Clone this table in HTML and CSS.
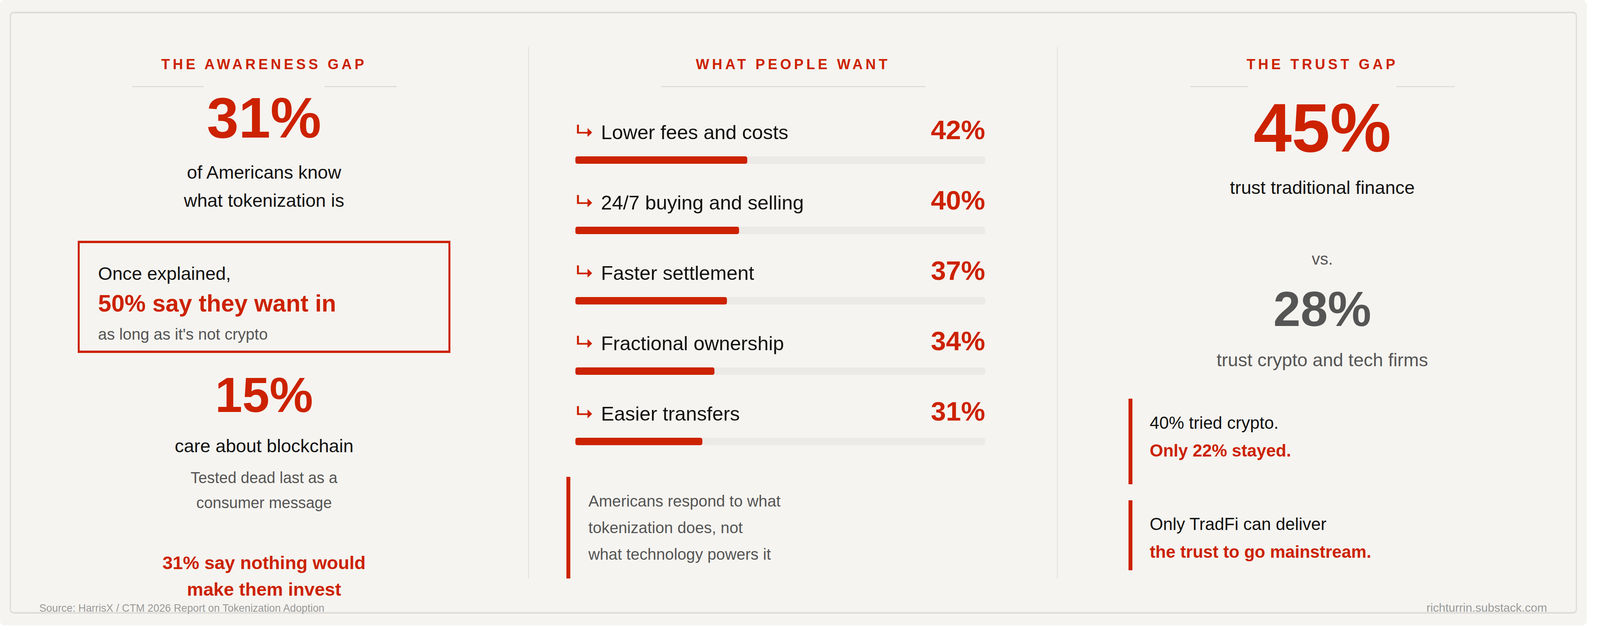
FILE: index.html
```html
<!DOCTYPE html>
<html lang="en">
<head>
<meta charset="utf-8">
<title>Tokenization Adoption</title>
<link rel="stylesheet" href="styles.css">
</head>
<body>
<div class="board">
  <div class="columns">
    <section class="col">
      <header class="col-head"><h2 class="col-title">THE AWARENESS GAP</h2></header>
      <div class="stat-num stat-num--lg">31%</div>
      <p class="stat-label stat-label--first">of Americans know<br>what tokenization is</p>
      <div class="callout">
        <p class="callout-lead">Once explained,</p>
        <p class="callout-key">50% say they want in</p>
        <p class="callout-note">as long as it's not crypto</p>
      </div>
      <div class="stat-num stat-num--md">15%</div>
      <p class="stat-label stat-label--after-md">care about blockchain</p>
      <p class="stat-sub">Tested dead last as a<br>consumer message</p>
      <p class="stat-alert">31% say nothing would<br>make them invest</p>
    </section>

    <section class="col">
      <header class="col-head"><h2 class="col-title">WHAT PEOPLE WANT</h2></header>
      <div class="want-list">
        <div class="want-row">
          <div class="want-head">
            <span class="want-label"><svg class="arrow" viewBox="0 0 46 37"><path d="M0 0h6v22h27v5H0z"/><path d="M32 10l14 13.5L32 37z"/></svg>Lower fees and costs</span>
            <span class="want-pct">42%</span>
          </div>
          <div class="track"><div class="fill" style="width:42%"></div></div>
        </div>
        <div class="want-row">
          <div class="want-head">
            <span class="want-label"><svg class="arrow" viewBox="0 0 46 37"><path d="M0 0h6v22h27v5H0z"/><path d="M32 10l14 13.5L32 37z"/></svg>24/7 buying and selling</span>
            <span class="want-pct">40%</span>
          </div>
          <div class="track"><div class="fill" style="width:40%"></div></div>
        </div>
        <div class="want-row">
          <div class="want-head">
            <span class="want-label"><svg class="arrow" viewBox="0 0 46 37"><path d="M0 0h6v22h27v5H0z"/><path d="M32 10l14 13.5L32 37z"/></svg>Faster settlement</span>
            <span class="want-pct">37%</span>
          </div>
          <div class="track"><div class="fill" style="width:37%"></div></div>
        </div>
        <div class="want-row">
          <div class="want-head">
            <span class="want-label"><svg class="arrow" viewBox="0 0 46 37"><path d="M0 0h6v22h27v5H0z"/><path d="M32 10l14 13.5L32 37z"/></svg>Fractional ownership</span>
            <span class="want-pct">34%</span>
          </div>
          <div class="track"><div class="fill" style="width:34%"></div></div>
        </div>
        <div class="want-row">
          <div class="want-head">
            <span class="want-label"><svg class="arrow" viewBox="0 0 46 37"><path d="M0 0h6v22h27v5H0z"/><path d="M32 10l14 13.5L32 37z"/></svg>Easier transfers</span>
            <span class="want-pct">31%</span>
          </div>
          <div class="track"><div class="fill" style="width:31%"></div></div>
        </div>
      </div>
      <p class="note">Americans respond to what<br>tokenization does, not<br>what technology powers it</p>
    </section>

    <section class="col">
      <header class="col-head"><h2 class="col-title">THE TRUST GAP</h2></header>
      <div class="stat-num stat-num--xl">45%</div>
      <p class="stat-label stat-label--after-xl">trust traditional finance</p>
      <p class="versus">vs.</p>
      <div class="stat-num stat-num--md stat-num--muted">28%</div>
      <p class="stat-label stat-label--muted">trust crypto and tech firms</p>
      <p class="quote quote--first">40% tried crypto.<br><strong class="quote-strong">Only 22% stayed.</strong></p>
      <p class="quote quote--second">Only TradFi can deliver<br><strong class="quote-strong">the trust to go mainstream.</strong></p>
    </section>
  </div>
  <footer class="board-foot">
    <span class="foot-source">Source: HarrisX / CTM 2026 Report on Tokenization Adoption</span>
    <span class="foot-site">richturrin.substack.com</span>
  </footer>
</div>
</body>
</html>
```

FILE: styles.css
```css
/* Horizontal sizes and type use rem (1/484 of the viewport width);
   vertical rhythm uses px against the 1640px-tall window. */
html {
  font-size: calc(100vw / 484);
}

html, body {
  margin: 0;
  padding: 0;
  background: #ffffff;
}

body {
  font-family: "Liberation Sans", Arial, Helvetica, sans-serif;
  color: #111111;
}

p, h2 {
  margin: 0;
}

.board {
  position: relative;
  width: 480rem;
  height: 1600px;
  background: #f5f4f0;
  border-radius: 1.4rem;
}

.board::before {
  content: "";
  position: absolute;
  top: 30px;
  bottom: 30px;
  left: 3rem;
  right: 3rem;
  border-style: solid;
  border-color: #dddcd9;
  border-width: 4px 0.4rem;
  border-radius: 1.2rem;
  pointer-events: none;
}

.columns {
  display: grid;
  grid-template-columns: repeat(3, 160rem);
  padding-top: 120px;
}

.col {
  box-sizing: border-box;
  height: 1360px;
  padding-top: 20px;
  text-align: center;
}

.col:not(:last-child) {
  border-right: 0.3rem solid #e0dfdc;
}

.col-head {
  width: 80rem;
  margin: 0 auto;
  padding-bottom: 30px;
  border-bottom: 3px solid #dedddb;
}

.col-title {
  font-size: 4.3rem;
  line-height: 50px;
  font-weight: 700;
  letter-spacing: 0.86rem;
  color: #cc2200;
}

/* big numbers */
.stat-num {
  width: fit-content;
  margin: -8px auto 0;
  background: #f5f4f0;
  font-weight: 700;
  color: #cc2200;
}

.stat-num--lg {
  font-size: 17.3rem;
  line-height: 173px;
  padding: 0 1rem;
}

.stat-num--xl {
  font-size: 20.8rem;
  line-height: 224px;
  padding: 0 1.6rem;
}

.stat-num--md {
  font-size: 14.8rem;
  line-height: 148px;
  margin-top: 34px;
}

.stat-num--muted {
  color: #555555;
  margin-top: 24px;
}

.stat-label {
  font-size: 5.56rem;
  line-height: 72px;
  color: #111111;
}

.stat-label--first { margin-top: 17px; }
.stat-label--after-md { margin-top: 20px; }
.stat-label--after-xl { margin-top: 5px; }
.stat-label--muted { margin-top: 20px; color: #555555; }

/* callout box */
.callout {
  box-sizing: border-box;
  width: 112.8rem;
  margin: 67px auto 0;
  border-style: solid;
  border-color: #cc2200;
  border-width: 6px 0.6rem;
  padding: 42px 5.6rem 11px;
  text-align: left;
}

.callout-lead {
  font-size: 5.56rem;
  line-height: 72px;
  color: #111111;
}

.callout-key {
  font-size: 7.2rem;
  line-height: 80px;
  font-weight: 700;
  color: #cc2200;
  margin-bottom: 8px;
}

.callout-note {
  font-size: 4.8rem;
  line-height: 62px;
  color: #555555;
}

.stat-sub {
  margin-top: 13px;
  font-size: 4.7rem;
  line-height: 64px;
  color: #555555;
}

.stat-alert {
  margin-top: 88px;
  font-size: 5.56rem;
  line-height: 68px;
  font-weight: 700;
  color: #cc2200;
}

/* what people want */
.want-list {
  width: 124rem;
  margin: 68px 0 0 14rem;
}

.want-row {
  height: 180px;
}

.want-head {
  height: 84.6px;
  display: flex;
  justify-content: space-between;
  align-items: baseline;
}

.want-label {
  font-size: 6rem;
  line-height: 72px;
  color: #111111;
}

.arrow {
  width: 4.6rem;
  height: 3.7rem;
  fill: #cc2200;
  vertical-align: 0.7rem;
  margin: 0 2.7rem 0 0.5rem;
}

.want-pct {
  font-size: 8.2rem;
  line-height: 82px;
  font-weight: 700;
  color: #cc2200;
}

.track {
  height: 19px;
  margin-top: 24.4px;
  background: #ebeae6;
  border-radius: 0.6rem;
}

.fill {
  height: 100%;
  background: #cc2200;
  border-radius: 0.6rem;
}

.note {
  margin: 29px 0 0 11.3rem;
  border-left: 1.2rem solid #cc2200;
  padding: 28px 0 28px 5.5rem;
  text-align: left;
  font-size: 4.8rem;
  line-height: 68px;
  color: #555555;
}

/* trust gap */
.versus {
  margin-top: 117px;
  font-size: 5rem;
  line-height: 60px;
  color: #555555;
}

.quote {
  margin-left: 21.4rem;
  border-left: 1.2rem solid #cc2200;
  padding-left: 5.2rem;
  text-align: left;
  font-size: 5.2rem;
  line-height: 71px;
  color: #111111;
}

.quote--first {
  margin-top: 63px;
  padding-top: 26px;
  padding-bottom: 51px;
}

.quote--second {
  margin-top: 41px;
  padding-top: 25px;
  padding-bottom: 12px;
}

.quote-strong {
  font-weight: 700;
  color: #cc2200;
}

/* footer */
.board-foot {
  position: absolute;
  left: 11.9rem;
  right: 12rem;
  top: 1535px;
  display: flex;
  justify-content: space-between;
  align-items: baseline;
  color: #999999;
}

.foot-source {
  font-size: 3.17rem;
  line-height: 40px;
}

.foot-site {
  font-size: 3.55rem;
  line-height: 40px;
}
```
